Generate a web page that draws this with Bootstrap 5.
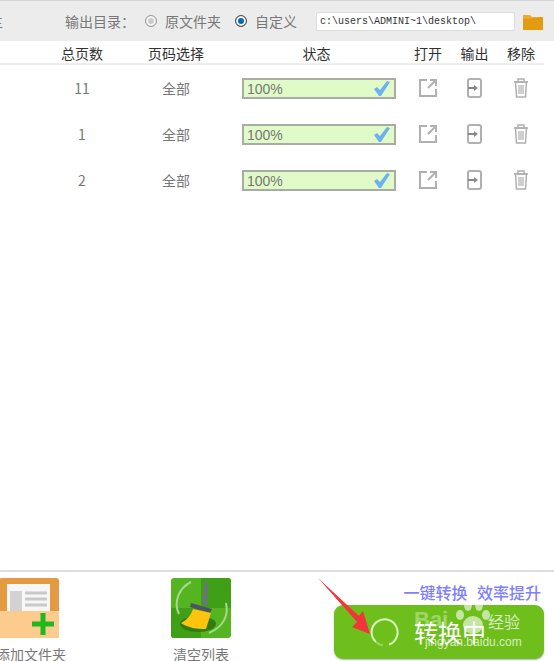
<!DOCTYPE html>
<html lang="zh-CN">
<head>
  <meta charset="UTF-8">
  <meta name="viewport" content="width=device-width, initial-scale=1.0">
  <title>转换中</title>
  <link rel="stylesheet" href="https://cdn.jsdelivr.net/npm/bootstrap@5.3.0/dist/css/bootstrap.min.css">
  <style>
    html, body { height: 661px; overflow: hidden; }
    body { font-family: "Noto Sans CJK SC", "Liberation Sans", sans-serif; font-size: 14px; color: #777; background: #fff; }
    .app-shell { height: 661px; }
    .tool-bar { height: 41px; background: #ececec; border-top: 1px solid #d4d4d4; }
    .cut-char { margin-left: -11px; width: 76px; flex: none; }
    .out-label { width: 80px; flex: none; }
    .radio-dot { width: 12px; height: 12px; border-radius: 50%; border: 1px solid #999; background: #ccc; box-shadow: inset 0 0 0 2px #f6f6f6; flex: none; }
    .radio-dot.is-on { background: #0f6aa8; border-color: #555; }
    .radio-text { margin-left: 8px; }
    .radio-gap { margin-left: 14px; }
    .path-box.form-control { width: 199px; height: 19px; margin-left: 19px; padding: 0 3px; border: 1px solid #ddd; border-radius: 2px; font: 10px "Liberation Mono", monospace; color: #333; flex: none; }
    .folder-btn { margin-left: 8px; }
    .list-grid { display: grid; grid-template-columns: 40px 84px 104px 177px 46px 47px 46px; width: 544px; text-align: center; align-items: center; }
    .list-head { height: 24px; border-bottom: 2px solid #eee; color: #333; line-height: 24px; }
    .list-row { height: 46px; }
    .state-bar { width: 154px; height: 21px; margin-left: 14px; padding-left: 3px; border: 2px solid #a8aca4; background: #e0fbc8; font: 14px/19px "Liberation Sans", sans-serif; color: #777; text-align: left; }
    .state-num { padding-top: 2px; }
    .foot-bar { height: 91px; border-top: 2px solid #ddd; }
    .tile { width: 60px; padding-top: 6px; flex: none; }
    .tile-one { margin-left: -1px; }
    .tile-two { margin-left: 112px; }
    .tile-label { width: 80px; margin: 6px -10px 0; text-align: center; line-height: 20px; white-space: nowrap; }
    .tile-one .tile-label { margin-left: -8px; }
    .go-area { width: 210px; margin-right: 10px; }
    .go-slogan { height: 33px; padding: 9px 3px 0 0; color: #8080ff; font-size: 16px; font-weight: 500; line-height: 22px; text-align: right; word-spacing: 6px; }
    .go-btn { height: 54px; border-radius: 9px; background: #6fbf1c; color: #fff; font-size: 24px; box-shadow: 0 1px 2px rgba(0,0,0,.3); }
    .go-ring { margin-left: 36px; margin-right: 14px; }
    .arrow-mark { position: absolute; left: 316px; top: 5px; }
    .mark-wrap { position: absolute; left: 414px; top: 32px; width: 120px; height: 60px; color: rgba(255,255,255,.72); }
    .mark-bai { position: absolute; left: 0; top: 3px; font: 700 22px "Liberation Sans", sans-serif; color: rgba(255,255,255,.35); }
    .mark-jing { position: absolute; left: 74px; top: 7px; font-size: 16px; line-height: 20px; }
    .mark-url { position: absolute; left: 11px; top: 31px; font: 12px "Liberation Sans", sans-serif; white-space: nowrap; }
    .mark-paw { position: absolute; left: 42px; top: -6px; }
  </style>
</head>
<body>

<div class="app-shell d-flex flex-column">

  <!-- output folder bar -->
  <div class="tool-bar d-flex align-items-center">
    <span class="cut-char">主</span>
    <span class="out-label">输出目录：</span>
    <span class="radio-dot"></span>
    <span class="radio-text">原文件夹</span>
    <span class="radio-dot is-on radio-gap"></span>
    <span class="radio-text">自定义</span>
    <input class="path-box form-control" type="text" readonly value="c:\users\ADMINI~1\desktop\">
    <svg class="folder-btn" width="20" height="17" viewBox="0 0 20 17">
      <path d="M0 2h7l2 2h11v13H0z" fill="#eeac2c"/>
      <path d="M0 6l20-2v13H0z" fill="#e39b12"/>
    </svg>
  </div>

  <!-- file list -->
  <div class="list-grid list-head">
    <span></span><span>总页数</span><span>页码选择</span><span>状态</span><span>打开</span><span>输出</span><span>移除</span>
  </div>
  <div id="fileRows" class="flex-grow-1"></div>

  <!-- bottom actions -->
  <div class="foot-bar d-flex position-relative">
    <div class="tile tile-one">
      <svg class="d-block" width="60" height="60" viewBox="0 0 60 60">
        <rect width="60" height="60" rx="3" fill="#e49a40"/>
        <rect x="8" y="6" width="43" height="34" fill="#f7f7f7"/>
        <rect x="11" y="13" width="12" height="20" fill="#d2d2d2"/>
        <path d="M26 15h22M26 21h22M26 27h22" stroke="#c9c9c9" stroke-width="3"/>
        <path d="M0 33h60v24a3 3 0 0 1-3 3H0z" fill="#fccb8e"/>
        <path d="M33 46h22M44 35v22" stroke="#1fb81f" stroke-width="5"/>
      </svg>
      <div class="tile-label">添加文件夹</div>
    </div>
    <div class="tile tile-two">
      <svg class="d-block" width="60" height="60" viewBox="0 0 60 60">
        <rect width="60" height="60" rx="3" fill="#55b520"/>
        <path d="M30 0h27a3 3 0 0 1 3 3v27H30zM0 30h30v30H3a3 3 0 0 1-3-3z" fill="#3f9f16"/>
        <path d="M8 36C2 24 8 10 20 4M55 25c3 13-3 24-17 30" fill="none" stroke="#a9d690" stroke-width="2"/>
        <ellipse cx="27" cy="46" rx="18" ry="8" fill="#2f7d12"/>
        <path d="M34 3l3 1-1 24-5-2z" fill="#6b7480"/>
        <path d="M20 25l21 6-2 4-20-6z" fill="#4c5560"/>
        <path d="M22 31l18 4-5 16c-9 0-18-1-25-6 6-3 10-8 12-14z" fill="#fcc40c"/>
      </svg>
      <div class="tile-label">清空列表</div>
    </div>
    <div class="go-area ms-auto">
      <div class="go-slogan">一键转换 效率提升</div>
      <div class="go-btn d-flex align-items-center">
        <svg class="go-ring" width="30" height="30" viewBox="0 0 30 30">
          <path d="M6 25A13 13 0 1 1 19 27.5" fill="none" stroke="#d8f2bd" stroke-width="2"/>
          <path d="M6 25a13 13 0 0 0 7 3.500" fill="none" stroke="#9ad75c" stroke-width="2"/>
        </svg>
        <span>转换中</span>
      </div>
    </div>

    <svg class="arrow-mark" width="58" height="62" viewBox="0 0 58 62">
      <path d="M2 1L43 39l4-5 7 23-18-7 5-5z" fill="#f2353a"/>
    </svg>

    <!-- site watermark over the button -->
    <div class="mark-wrap">
      <span class="mark-bai">Bai</span>
      <svg class="mark-paw" width="34" height="40" viewBox="0 0 34 40" fill="rgba(255,255,255,.6)">
        <ellipse cx="12" cy="7" rx="4" ry="6"/><ellipse cx="23" cy="7" rx="4" ry="6"/>
        <ellipse cx="4" cy="17" rx="4" ry="5"/><ellipse cx="30" cy="17" rx="4" ry="5"/>
        <ellipse cx="17" cy="27" rx="10" ry="9"/>
      </svg>
      <span class="mark-jing">经验</span>
      <span class="mark-url">jingyan.baidu.com</span>
    </div>
  </div>
</div>

<script src="https://cdn.jsdelivr.net/npm/bootstrap@5.3.0/dist/js/bootstrap.bundle.min.js"></script>
<script>
  // Rows of the converted files
  const files = [{ pages: 11 }, { pages: 1 }, { pages: 2 }];
  const stroke = 'fill="none" stroke="#b0b0b0" stroke-width="2"';

  document.getElementById('fileRows').innerHTML = files.map(file => `
    <div class="list-grid list-row">
      <span></span>
      <span>${file.pages}</span>
      <span>全部</span>
      <div class="state-bar d-flex align-items-center justify-content-between">
        <span class="state-num">100%</span>
        <svg class="me-1" width="17" height="16" viewBox="0 0 17 16"><path d="M1 9l3-2 3 3 7-9 3 1-9 14h-2z" fill="#6fb1ee"/></svg>
      </div>
      <svg class="mx-auto" width="20" height="20" viewBox="0 0 20 20" ${stroke}><path d="M9 2H2v16h16v-7M10 10l8-8M12 2h6v6"/></svg>
      <svg class="mx-auto" width="15" height="20" viewBox="0 0 15 20" ${stroke}><rect x="1" y="1" width="13" height="18" rx="2"/><path d="M1 10h7" stroke="#888"/><path d="M7 7l4 3-4 3z" fill="#888" stroke="none"/></svg>
      <svg class="mx-auto" width="16" height="20" viewBox="0 0 16 20" ${stroke}><path d="M1 4h14M5 4V1h6v3" stroke-width="1.500"/><path d="M2.500 4l1 15h9l1-15z" stroke-width="1.500"/><path d="M6 7v9M8 7v9M10 7v9" stroke-width="1.200"/></svg>
    </div>`).join('');
</script>

</body>
</html>
